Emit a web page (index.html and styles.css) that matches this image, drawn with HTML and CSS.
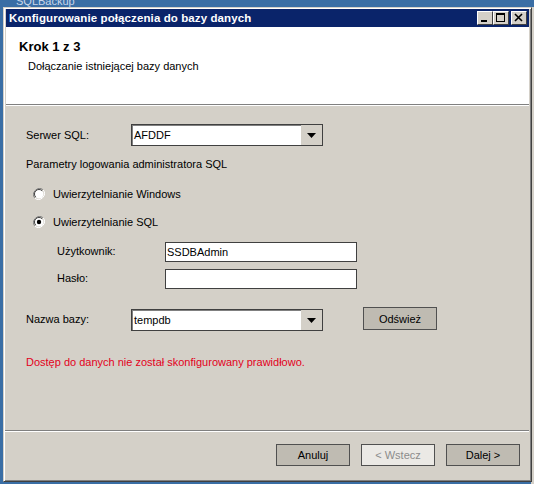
FILE: index.html
```html
<!DOCTYPE html>
<html lang="pl">
<head>
<meta charset="utf-8">
<title>Konfigurowanie połączenia do bazy danych</title>
<link rel="stylesheet" href="styles.css">
</head>
<body>
<div class="desk"><span class="desk-label">SQLBackup</span></div>
<div class="window">
  <div class="titlebar">
    <span class="title">Konfigurowanie połączenia do bazy danych</span>
    <div class="caps">
      <span class="cap"><svg width="14" height="12" viewBox="0 0 14 12"><rect x="3" y="8" width="6" height="2" fill="#000"/></svg></span>
      <span class="cap"><svg width="14" height="12" viewBox="0 0 14 12"><rect x="2.5" y="1.5" width="8" height="8" fill="none" stroke="#000"/><rect x="2" y="1" width="9" height="2" fill="#000"/></svg></span>
      <span class="cap cap-close"><svg width="14" height="12" viewBox="0 0 14 12"><path d="M3 2 L10 9 M10 2 L3 9" stroke="#000" stroke-width="1.6"/></svg></span>
    </div>
  </div>
  <div class="header">
    <div class="step">Krok 1 z 3</div>
    <div class="subtitle">Dołączanie istniejącej bazy danych</div>
  </div>
  <div class="content">
    <div class="row row-server">
      <span class="label">Serwer SQL:</span>
      <div class="combo"><span class="combo-val">AFDDF</span><span class="combo-btn"><svg width="9" height="5" viewBox="0 0 9 5"><path d="M0 0 H9 L4.5 5 Z" fill="#000"/></svg></span></div>
    </div>
    <div class="row row-params">Parametry logowania administratora SQL</div>
    <div class="row row-radio1">
      <span class="radio"><svg width="12" height="12" viewBox="0 0 12 12"><path d="M10.2 1.8 A6 6 0 0 0 1.8 10.2" fill="none" stroke="#808080"/><path d="M1.8 10.2 A6 6 0 0 0 10.2 1.8" fill="none" stroke="#fff"/><circle cx="6" cy="6" r="4.5" fill="#fff"/><path d="M9.2 2.8 A4.5 4.5 0 0 0 2.8 9.2" fill="none" stroke="#404040"/></svg></span>
      <span class="radio-text">Uwierzytelnianie Windows</span>
    </div>
    <div class="row row-radio2">
      <span class="radio"><svg width="12" height="12" viewBox="0 0 12 12"><path d="M10.2 1.8 A6 6 0 0 0 1.8 10.2" fill="none" stroke="#808080"/><path d="M1.8 10.2 A6 6 0 0 0 10.2 1.8" fill="none" stroke="#fff"/><circle cx="6" cy="6" r="4.5" fill="#fff"/><path d="M9.2 2.8 A4.5 4.5 0 0 0 2.8 9.2" fill="none" stroke="#404040"/><circle cx="6" cy="6" r="2.2" fill="#000"/></svg></span>
      <span class="radio-text">Uwierzytelnianie SQL</span>
    </div>
    <div class="row row-user">
      <span class="sublabel">Użytkownik:</span>
      <div class="textbox">SSDBAdmin</div>
    </div>
    <div class="row row-pass">
      <span class="sublabel">Hasło:</span>
      <div class="textbox"></div>
    </div>
    <div class="row row-db">
      <span class="label">Nazwa bazy:</span>
      <div class="combo"><span class="combo-val">tempdb</span><span class="combo-btn"><svg width="9" height="5" viewBox="0 0 9 5"><path d="M0 0 H9 L4.5 5 Z" fill="#000"/></svg></span></div>
      <span class="btn btn-refresh">Odśwież</span>
    </div>
    <div class="row row-error">Dostęp do danych nie został skonfigurowany prawidłowo.</div>
  </div>
  <div class="footer">
    <span class="btn">Anuluj</span>
    <span class="btn btn-disabled">&lt; Wstecz</span>
    <span class="btn">Dalej &gt;</span>
  </div>
</div>
</body>
</html>
```
FILE: styles.css
```css
html, body {
  margin: 0;
  padding: 0;
}
body {
  width: 534px;
  height: 484px;
  overflow: hidden;
  background:
    linear-gradient(#3a6ea5 0 7px, transparent 7px),
    linear-gradient(to right, #3a6ea5 531px, #d4d0c8 531px);
  font-family: "Liberation Sans", Arial, sans-serif;
  font-size: 11px;
  color: #000;
}
.desk {
  height: 7px;
  overflow: hidden;
  padding-left: 16px;
}
.desk-label {
  display: block;
  margin-top: -5px;
  color: #c8d6ea;
  font-size: 11px;
  line-height: 13px;
}
.window {
  margin-left: 3px;
  width: 524px;
  height: 470px;
  background: #d4d0c8;
  border-top: 1px solid #d4d0c8;
  border-left: 1px solid #d4d0c8;
  border-right: 1px solid #404040;
  border-bottom: 1px solid #404040;
  box-shadow: inset 1px 1px 0 #fff, inset -1px -1px 0 #808080;
  padding: 1px 2px 2px 1px;
  display: flex;
  flex-direction: column;
}
.titlebar {
  height: 18px;
  flex: none;
  background: #0a246a;
  display: flex;
  align-items: center;
  justify-content: space-between;
  padding-left: 3px;
  margin-left: 1px;
}
.title {
  color: #fff;
  font-weight: bold;
  font-size: 11.5px;
  letter-spacing: 0.1px;
}
.caps {
  display: flex;
  padding-right: 2px;
}
.cap {
  width: 16px;
  height: 14px;
  box-sizing: border-box;
  background: #d4d0c8;
  border-top: 1px solid #fff;
  border-left: 1px solid #fff;
  border-right: 1px solid #404040;
  border-bottom: 1px solid #404040;
  display: flex;
  align-items: center;
  justify-content: center;
}
.cap-close {
  margin-left: 2px;
}
.header {
  height: 78px;
  flex: none;
  background: #fff;
  border-bottom: 1px solid #808080;
  box-shadow: 0 1px 0 #fff;
  margin-left: 1px;
  box-sizing: border-box;
  padding-top: 12px;
}
.step {
  font-weight: bold;
  font-size: 13px;
  line-height: 16px;
  padding-left: 13px;
}
.subtitle {
  padding-left: 22px;
  margin-top: 4px;
  line-height: 14px;
}
.content {
  height: 325px;
  flex: none;
  margin-top: 1px;
  padding-left: 21px;
  box-sizing: border-box;
  display: flex;
  flex-direction: column;
  border-bottom: 1px solid #808080;
  box-shadow: 0 1px 0 #fff;
}
.row {
  display: flex;
  align-items: center;
  flex: none;
}
.row-server { height: 22px; margin-top: 18px; }
.row-params { height: 16px; margin-top: 10px; }
.row-radio1 { height: 16px; margin-top: 14px; padding-left: 7px; }
.row-radio2 { height: 16px; margin-top: 12px; padding-left: 7px; }
.row-user { height: 20px; margin-top: 12px; }
.row-pass { height: 20px; margin-top: 7px; }
.row-db { height: 24px; margin-top: 18px; align-items: flex-start; }
.row-error { height: 16px; margin-top: 23px; color: #e3001b; }
.label {
  width: 105px;
  flex: none;
}
.row-db .label {
  margin-top: 6px;
}
.sublabel {
  width: 108px;
  padding-left: 31px;
  flex: none;
  margin-top: -3px;
}
.radio {
  width: 12px;
  height: 12px;
  display: flex;
  margin-right: 8px;
}
.combo {
  width: 192px;
  height: 22px;
  box-sizing: border-box;
  border: 1px solid #404040;
  box-shadow: inset 1px 1px 0 #808080;
  background: #fff;
  display: flex;
  align-items: stretch;
}
.row-db .combo {
  margin-top: 2px;
}
.combo-val {
  flex: 1;
  padding-left: 2px;
  display: flex;
  align-items: center;
}
.combo-btn {
  width: 21px;
  background: #d4d0c8;
  display: flex;
  align-items: center;
  justify-content: center;
}
.textbox {
  width: 192px;
  height: 20px;
  box-sizing: border-box;
  border: 1px solid #404040;
  background: #fff;
  padding-left: 1px;
  display: flex;
  align-items: center;
}
.btn {
  width: 74px;
  height: 22px;
  box-sizing: border-box;
  border: 1px solid #505050;
  background: #bfbbb2;
  font-weight: normal;
  display: flex;
  align-items: center;
  justify-content: center;
}
.btn-refresh {
  margin-left: 40px;
  height: 23px;
}
.btn-disabled {
  background: #ebe9e5;
  color: #8c8c8c;
}
.footer {
  flex: 1;
  display: flex;
  justify-content: flex-end;
  gap: 11px;
  padding-top: 13px;
  padding-right: 9px;
  align-items: flex-start;
}
```
